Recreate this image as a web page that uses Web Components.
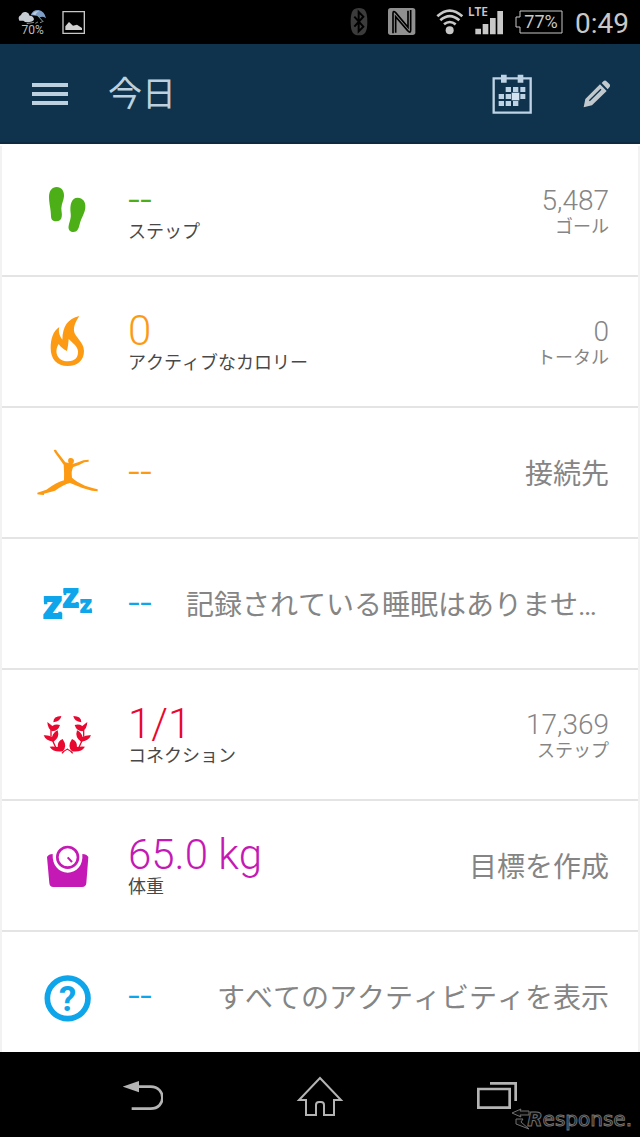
<!DOCTYPE html>
<html lang="ja">
<head>
<meta charset="utf-8">
<meta name="viewport" content="width=device-width, initial-scale=1">
<title>今日</title>
<style>
  html, body { margin: 0; height: 100%; background: #000; }
  body { font-family: Roboto, "Noto Sans CJK JP", sans-serif; font-kerning: none; }
</style>
</head>
<body>
<phone-screen>
  <status-bar slot="top"></status-bar>
  <app-bar slot="top">今日</app-bar>
  <stat-row icon="steps" color="#4caf17" href="#steps">
    <span slot="value">--</span><span slot="label">ステップ</span>
    <span slot="amount">5,487</span><span slot="unit">ゴール</span>
  </stat-row>
  <stat-row icon="flame" color="#fd9a14" href="#calories">
    <span slot="value">0</span><span slot="label">アクティブなカロリー</span>
    <span slot="amount">0</span><span slot="unit">トータル</span>
  </stat-row>
  <stat-row icon="dancer" color="#fd9a14" href="#connect">
    <span slot="value">--</span><span slot="message">接続先</span>
  </stat-row>
  <stat-row icon="sleep" color="#0ea5ea" href="#sleep" long>
    <span slot="value">--</span><span slot="message">記録されている睡眠はありませ…</span>
  </stat-row>
  <stat-row icon="laurel" color="#e9082f" href="#connections">
    <span slot="value">1/1</span><span slot="label">コネクション</span>
    <span slot="amount">17,369</span><span slot="unit">ステップ</span>
  </stat-row>
  <stat-row icon="scale" color="#c419b4" href="#weight">
    <span slot="value">65.0 kg</span><span slot="label">体重</span>
    <span slot="message">目標を作成</span>
  </stat-row>
  <stat-row icon="help" color="#0ea5ea" href="#all">
    <span slot="value">--</span><span slot="message">すべてのアクティビティを表示</span>
  </stat-row>
  <nav-bar slot="bottom"></nav-bar>
</phone-screen>

<script>
const define = (name, html, setup) => customElements.define(name, class extends HTMLElement {
  constructor() {
    super();
    this.attachShadow({ mode: 'open' }).innerHTML = html;
  }
  connectedCallback() { if (setup) setup(this, this.shadowRoot); }
});

const laurelHalf = `
    <path d="M160 157Q160 138 184 138Q182 154 160 157ZM142 156Q151 163 157 168Q167 161 180 165Q175 182 157 184Q143 177 142 156ZM131 196Q147 195 156 201Q161 186 173 181Q180 202 161 215Q138 214 131 196ZM149 230Q163 229 173 231Q172 213 188 207Q203 229 188 244Q160 248 149 230Z"/>
    <path d="M153 180V200M158 212L168 234M186 250Q192 242 203 237" fill="none" stroke="currentColor" stroke-width="4"/>`;

const icons = {
  steps: `<g transform="translate(-36 -29) scale(.33333)" fill="currentColor">
    <path d="M170 111C184 111 193 122 192 139C191 152 185 160 184 175C184 185 187 192 185 201C183 210 178 214 169 214C158 214 153 208 153 199C153 176 147 162 147 140C147 123 156 111 170 111Z"/>
    <path d="M233 143C248 143 258 156 256 173C254 191 244 203 240 219C236 237 232 246 220 246C209 246 204 238 206 227C209 213 214 205 212 190C209 165 214 143 233 143Z"/></g>`,
  flame: `<g transform="translate(-36 -160) scale(.33333)">
    <path fill="currentColor" fill-rule="evenodd" d="M238 498C226 516 221 530 222 542C223 560 252 575 252 603C252 630 233 648 203 648C171 648 152 628 152 594C152 566 159 544 178 531C175 543 177 555 187 569C188 529 203 506 238 498ZM176 582C161 606 172 634 204 634C226 634 235 621 234 604C233 588 218 580 206 567C205 579 204 590 201 603C191 598 182 592 176 582Z"/></g>`,
  dancer: `<g transform="translate(-36 -41) scale(.33333)" fill="currentColor">
    <path d="M161 150L168 149L172 156L196 187Q204 189 206 190Q201 176 210 174Q221 173 222 182Q222 190 216 193Q240 186 250 181L266 179V185L253 187Q237 197 220 201Q213 212 216 233Q230 246 255 257L280 265L293 268V274L276 272Q245 265 210 249Q190 254 165 272L132 281V285L122 284L112 283V278L139 269Q170 247 192 241Q193 218 191 194L164 157Z"/></g>`,
  sleep: `<g transform="translate(-36 -172) scale(.33333)" fill="currentColor" font-family="Open Sans" font-weight="800" text-anchor="middle">
    <text x="158" y="657" font-size="123">z</text><text x="212" y="624" font-size="104">z</text><text x="258" y="639" font-size="76">z</text>
    <path d="M132 590h10v23h-10zM175 635h10v22h-10zM191 567h8v18h-8zM227 606h8v18h-8zM242 597h6v14h-6zM269 625h6v14h-6z"/></g>`,
  laurel: `<g transform="translate(-36 -33) scale(.33333)" fill="currentColor">${laurelHalf}
    <g transform="translate(404 0) scale(-1 1)">${laurelHalf}</g></g>`,
  scale: `<g transform="translate(-36 -164) scale(.33333)" fill="currentColor">
    <path d="M141 561Q146 552 158 552C156 586 177 608 203 608C230 608 250 586 247 552Q260 552 265 561L259 639Q258 651 246 651H160Q149 651 148 639Z"/>
    <circle cx="203" cy="562" r="31" fill="none" stroke="currentColor" stroke-width="8"/>
    <path d="M203 562L216 576" stroke="currentColor" stroke-width="6"/></g>`,
  help: `<g transform="translate(-36 -35) scale(.33333)" fill="currentColor">
    <circle cx="203" cy="205" r="61" fill="none" stroke="currentColor" stroke-width="17"/>
    <text x="203" y="242" font-size="104" font-family="Roboto" font-weight="700" text-anchor="middle">?</text></g>`
};

define('phone-screen', `
<style>
  :host { display: flex; flex-direction: column; height: 100vh; min-width: 320px; }
  main { flex: 1; min-height: 0; overflow-y: auto; scrollbar-width: none; padding: 2px 2px 0;
         background: linear-gradient(#fff, #fff) content-box, linear-gradient(#fff 2px, #f2f2f2 2px); }
</style>
<slot name="top"></slot><main><slot></slot></main><slot name="bottom"></slot>`);

define('status-bar', `
<style>
  :host { display: flex; align-items: center; justify-content: space-between; height: 44px; padding: 0 11px 0 18px; background: #000; color: #c8c8c8; }
  .left { display: flex; gap: 16px; }
  .right, .power { display: flex; align-items: center; gap: 12px; }
  .radios { display: flex; gap: 20px; }
  .net { display: flex; gap: 4px; }
  svg { display: block; overflow: visible; }
  .battery { position: relative; display: block; width: 48px; height: 24px; }
  .battery span { position: absolute; inset: 0 0 0 4px; font-size: 18px; line-height: 24px; text-align: center; }
  time { font-size: 28px; line-height: 40px; padding-top: 4px; }
</style>
<div class="left">
  <svg width="28" height="28" viewBox="0 0 28 28"><g transform="translate(-18 -8) scale(.33333)">
    <path d="M92 46Q98 29 116 30Q134 34 138 55Q128 48 120 52Q110 45 92 46Z" fill="#7f9fc8"/>
    <path d="M96 42Q104 32 117 33Q108 38 106 46Z" fill="#bccbe0"/>
    <path d="M114 48L130 66" stroke="#8aa" stroke-width="3"/>
    <path d="M58 62Q52 50 63 45Q67 34 78 36Q87 38 89 47Q101 48 102 58Q99 66 88 66Q76 68 70 62Z" fill="#c6ccd4"/>
    <path d="M80 71l22-4M106 70l8-4M120 68l8-3" stroke="#888" stroke-width="3"/>
    <text x="98" y="101" font-size="36" font-family="Roboto" text-anchor="middle" fill="#bbb">70%</text></g></svg>
  <svg width="24" height="28" viewBox="0 0 24 28"><g transform="translate(-63 -8) scale(.33333)">
    <path d="M192 35H256V100H192Z" fill="none" stroke="#c8c8c8" stroke-width="4"/>
    <path d="M199 90V79L210 66L222 77L234 74L249 84V90Z" fill="#d0d0d0"/></g></svg>
</div>
<div class="right">
  <div class="radios">
    <svg width="18" height="28" viewBox="0 0 18 28"><g transform="translate(-13 -8) scale(.33333)">
      <path d="M66 24C84 24 91 34 91 65S84 106 66 106S41 96 41 65S48 24 66 24Z" fill="#3b3b3b"/>
      <path d="M52 50L79 80L65 94V36L79 50L52 80" fill="none" stroke="#000" stroke-width="6"/></g></svg>
    <svg width="28" height="28" viewBox="0 0 28 28"><g transform="translate(-51 -8) scale(.33333)">
      <rect x="153" y="24" width="82" height="81" rx="8" fill="#909090"/>
      <path d="M168 100V40Q168 30 176 38L213 82V32M176 98V50L212 92Q221 102 221 90V30" fill="none" stroke="#000" stroke-width="5"/></g></svg>
    <div class="net">
      <svg width="28" height="28" viewBox="0 0 28 28"><g transform="translate(-98 -8) scale(.33333)" fill="none" stroke="#c8c8c8" stroke-width="8">
        <path d="M298 49Q335 15 373 49M307 61Q335 36 364 61M318 73Q335 59 353 73"/><circle cx="335" cy="91" r="12" fill="#c8c8c8" stroke="none"/></g></svg>
      <svg width="35" height="28" viewBox="0 0 35 28"><g transform="translate(-129 -8) scale(.33333)" fill="#c8c8c8">
        <path d="M409 86h17v17h-17zM431 72h17v31h-17zM453 54h17v49h-17zM475 33h17v70h-17z"/>
        <text x="387" y="49" font-size="36" font-family="Noto Sans" font-weight="600">LTE</text></g></svg>
    </div>
  </div>
  <div class="power">
    <div class="battery"><svg width="48" height="24" viewBox="0 0 48 24"><path d="M5 1H47V23H5V17H1V7H5Z" fill="none" stroke="#c8c8c8"/></svg><span>77%</span></div>
    <time>0:49</time>
  </div>
</div>`);

define('app-bar', `
<style>
  :host { display: flex; box-sizing: border-box; height: 100px; padding: 0 30px 0 32px; background: #0f334d; color: #bdd0df; box-shadow: inset 0 -2px #0d2a40; }
  header { flex: 1; display: flex; align-items: center; }
  h1 { flex: 1; margin: 0 0 0 40px; font-size: 34px; line-height: 48px; font-weight: 400; }
  .actions { display: flex; align-items: center; gap: 50px; }
  button { display: block; padding: 0; border: 0; background: none; color: inherit; }
  svg { display: block; }
</style>
<header>
  <button aria-label="メニュー"><svg width="36" height="24" viewBox="0 0 36 24"><path d="M0 3H36M0 12H36M0 21H36" stroke="currentColor" stroke-width="4"/></svg></button>
  <h1><slot></slot></h1>
  <div class="actions">
    <button aria-label="カレンダー"><svg width="40" height="40" viewBox="0 0 40 40"><g transform="translate(-152 -74) scale(.33333)" fill="#bed3e4">
      <path d="M461 235H572V338H461Z" fill="none" stroke="#bed3e4" stroke-width="7"/>
      <path d="M483 224h17v24h-17zM533 224h17v24h-17zM497 261h16v15h-16zM519 261h16v15h-16zM541 261h15v15h-15zM476 282h16v15h-16zM497 282h16v15h-16zM541 282h15v15h-15zM476 303h16v15h-16zM497 303h16v15h-16zM519 303h16v15h-16z"/>
      <path d="M515 278h23v23h-23z" fill="#d3e3f0"/></g></svg></button>
    <button aria-label="編集"><svg width="28" height="28" viewBox="0 0 28 28"><g transform="translate(-242 -80) scale(.33333)" fill="#c2c9ce">
      <path d="M731 322L736 297L780 253L800 273L756 316ZM785 249L791 243Q796 240 801 245L809 253Q812 258 808 262L803 268Z"/>
      <path d="M748 302L783 268" stroke="#0f334d" stroke-width="4"/></g></svg></button>
  </div>
</header>`);

define('stat-row', `
<style>
  :host { display: block; background: #fff; border-bottom: 2px solid #e4e4e4; }
  a { display: flex; align-items: center; min-height: 129px; padding: 0 29px 0 34px; color: inherit; text-decoration: none; }
  .icon { width: 92px; flex: none; color: var(--accent); }
  svg { display: block; }
  .main, .side { display: flex; flex-direction: column; white-space: nowrap; }
  .main { padding-bottom: 2px; }
  .side { flex: 1; min-width: 0; text-align: right; color: #858585; }
  :host([long]) .side { text-align: left; padding-left: 34px; }
  slot { display: block; }
  slot[name=value] { color: var(--accent); font-size: 42px; line-height: 44px; font-weight: 300; }
  slot[name=label] { color: #484848; font-size: 18px; line-height: 20px; }
  slot[name=amount] { font-size: 28px; line-height: 32px; font-weight: 300; }
  slot[name=unit] { font-size: 18px; line-height: 20px; }
  slot[name=message] { font-size: 28px; line-height: 40px; padding-top: 4px; overflow: hidden; text-overflow: ellipsis; }
</style>
<a><span class="icon"></span>
<span class="main"><slot name="value"></slot><slot name="label"></slot></span>
<span class="side"><slot name="amount"></slot><slot name="unit"></slot><slot name="message"></slot></span></a>`,
(host, root) => {
  host.style.setProperty('--accent', host.getAttribute('color'));
  root.querySelector('a').setAttribute('href', host.getAttribute('href'));
  root.querySelector('.icon').innerHTML = `<svg width="64" height="64" viewBox="0 0 64 64" aria-hidden="true">${icons[host.getAttribute('icon')]}</svg>`;
  for (const s of root.querySelectorAll('slot')) if (!s.assignedNodes().length) s.style.display = 'none';
});

define('nav-bar', `
<style>
  :host { display: block; position: relative; background: #000; color: #b4b4b4; }
  nav { display: grid; grid-template-columns: repeat(3, 1fr); align-items: center; height: 85px; padding: 2px 54px 0; box-sizing: border-box; }
  button { display: flex; justify-content: center; padding: 0; border: 0; background: none; color: inherit; }
  svg { display: block; }
  .mark { position: absolute; right: 8px; bottom: 4px; display: flex; align-items: center; font: 20px/28px "DejaVu Sans", sans-serif; color: #0a0a0a; -webkit-text-stroke: 1px #707070; }
  .mark svg { margin-right: -4px; }
  i { font-weight: 700; }
</style>
<nav>
  <button aria-label="戻る"><svg width="40" height="32" viewBox="0 0 40 32"><g transform="translate(-123 -149) scale(.33333)">
    <path d="M368 467L417 450V484Z" fill="currentColor"/><path d="M410 467H452C499 467 499 533 452 533H395" fill="none" stroke="currentColor" stroke-width="8"/></g></svg></button>
  <button aria-label="ホーム"><svg width="48" height="48" viewBox="0 0 48 48"><path d="M24 6L3 28H10V43H20V33Q20 30 23 30H25Q28 30 28 33V43H38V28H45Z" fill="none" stroke="currentColor" stroke-width="2"/></svg></button>
  <button aria-label="アプリ履歴"><svg width="40" height="32" viewBox="0 0 40 32"><g transform="translate(-158 -149) scale(.33333)" fill="none" stroke="currentColor" stroke-width="8">
    <path d="M478 474H572V530H478ZM513 457H590V510"/></g></svg></button>
</nav>
<span class="mark"><svg width="20" height="24" viewBox="0 0 20 24"><path d="M1 6L10 2L9 4H18V8H9L10 10ZM5 12H12L10 15L18 22L5 17Z" fill="#0a0a0a" stroke="#707070"/></svg><i>R</i>esponse.</span>`);
</script>
</body>
</html>
